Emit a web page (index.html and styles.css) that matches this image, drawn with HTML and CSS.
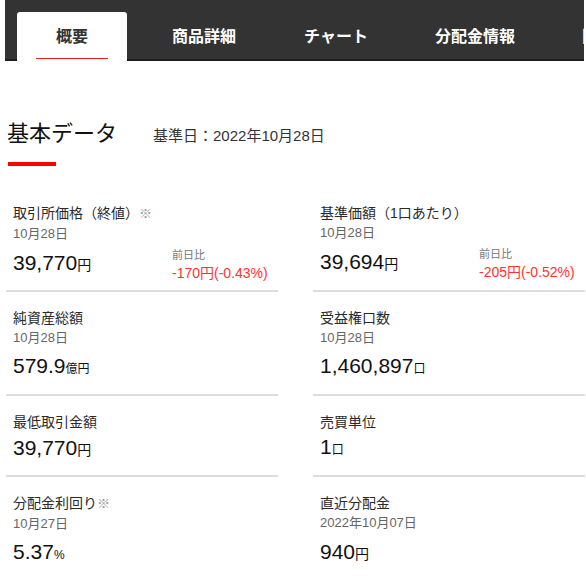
FILE: index.html
```html
<!DOCTYPE html>
<html lang="ja">
<head>
<meta charset="utf-8">
<title>基本データ</title>
<link rel="stylesheet" href="styles.css">
</head>
<body>
<div class="page">
  <nav class="tabs">
    <div class="tab active"><span class="tab-label">概要</span><span class="tab-line"></span></div>
    <div class="tab"><span class="tab-label">商品詳細</span></div>
    <div class="tab"><span class="tab-label">チャート</span></div>
    <div class="tab tab-wide"><span class="tab-label">分配金情報</span></div>
    <div class="tab"><span class="tab-label">関連情報</span></div>
  </nav>

  <section class="basic">
    <div class="heading">
      <h2 class="title">基本データ</h2>
      <span class="base-date">基準日：2022年10月28日</span>
    </div>
    <div class="heading-bar"></div>

    <div class="grid">
      <div class="item">
        <div class="label">取引所価格（終値）<span class="note">※</span></div>
        <div class="date">10月28日</div>
        <div class="value-row">
          <div class="value">39,770<span class="unit">円</span></div>
          <div class="change">
            <div class="change-label">前日比</div>
            <div class="change-val">-170円(-0.43%)</div>
          </div>
        </div>
      </div>
      <div class="item">
        <div class="label">基準価額（1口あたり）</div>
        <div class="date">10月28日</div>
        <div class="value-row">
          <div class="value">39,694<span class="unit">円</span></div>
          <div class="change">
            <div class="change-label">前日比</div>
            <div class="change-val">-205円(-0.52%)</div>
          </div>
        </div>
      </div>

      <div class="item">
        <div class="label">純資産総額</div>
        <div class="date">10月28日</div>
        <div class="value-row">
          <div class="value">579.9<span class="unit small">億円</span></div>
        </div>
      </div>
      <div class="item">
        <div class="label">受益権口数</div>
        <div class="date">10月28日</div>
        <div class="value-row">
          <div class="value">1,460,897<span class="unit small">口</span></div>
        </div>
      </div>

      <div class="item nodate">
        <div class="label">最低取引金額</div>
        <div class="value-row">
          <div class="value">39,770<span class="unit">円</span></div>
        </div>
      </div>
      <div class="item nodate">
        <div class="label">売買単位</div>
        <div class="value-row">
          <div class="value">1<span class="unit small">口</span></div>
        </div>
      </div>

      <div class="item">
        <div class="label">分配金利回り<span class="note">※</span></div>
        <div class="date">10月27日</div>
        <div class="value-row">
          <div class="value">5.37<span class="unit small">%</span></div>
        </div>
      </div>
      <div class="item">
        <div class="label">直近分配金</div>
        <div class="date">2022年10月07日</div>
        <div class="value-row">
          <div class="value">940<span class="unit">円</span></div>
        </div>
      </div>
    </div>
  </section>
</div>
</body>
</html>
```

FILE: styles.css
```css
html, body {
  margin: 0;
  padding: 0;
  background: #fff;
}

body {
  font-family: "Liberation Sans", "Noto Sans CJK JP", sans-serif;
  color: #222;
}

.page {
  margin-left: 5px;
  width: 580px;
}

/* ---------- tabs ---------- */
.tabs {
  display: flex;
  gap: 22px;
  width: 579px;
  height: 61px;
  box-sizing: border-box;
  padding-left: 12px;
  background: #333333;
  box-shadow: inset 0 -2px 0 #1e1e1e;
  overflow: hidden;
}

.tab {
  flex-shrink: 0;
  min-width: 110px;
  height: 49px;
  margin-top: 12px;
  padding: 0 18px;
  box-sizing: border-box;
  display: flex;
  flex-direction: column;
  align-items: center;
}

.tab.tab-wide {
  padding: 0 22px;
}

.tab-label {
  margin-top: 11px;
  font-family: "Noto Sans CJK JP", sans-serif;
  font-size: 16px;
  font-weight: 700;
  line-height: 24px;
  color: #fff;
  white-space: nowrap;
}

.tab.active {
  background: #fff;
  border-radius: 3px 3px 0 0;
}

.tab.active .tab-label {
  color: #333;
}

.tab-line {
  display: block;
  width: 72px;
  height: 1px;
  margin-top: 11px;
  background: #f02020;
}

/* ---------- heading ---------- */
.heading {
  display: flex;
  align-items: baseline;
  margin-top: 58px;
}

.title {
  margin: 0 0 0 2px;
  font-size: 22px;
  line-height: 30px;
  font-weight: 400;
  color: #111;
}

.base-date {
  margin-left: 36px;
  font-size: 15px;
  color: #333;
}

.heading-bar {
  width: 48px;
  height: 4px;
  margin: 13px 0 0 3px;
  background: #ff0000;
}

/* ---------- grid ---------- */
.grid {
  display: grid;
  grid-template-columns: 272px 272px;
  column-gap: 35px;
  row-gap: 16px;
  margin: 37px 0 0 1px;
}

.item {
  padding: 0 7px 10px;
  border-bottom: 2px solid #dddddd;
}

.label {
  font-size: 14px;
  line-height: 20px;
  color: #2a2a2a;
  white-space: nowrap;
}

.note {
  color: #999;
  font-size: 13px;
}

.date {
  font-size: 13px;
  line-height: 20px;
  color: #666;
}

.value-row {
  display: flex;
  align-items: flex-end;
  height: 32px;
  margin-top: 4px;
}

.item.nodate .value-row {
  height: 29px;
}

.value {
  width: 159px;
  flex-shrink: 0;
  font-size: 21px;
  line-height: 30px;
  color: #111;
}

.unit {
  font-size: 14px;
}

.unit.small {
  font-size: 12px;
}

.change {
  margin-bottom: -2px;
  white-space: nowrap;
}

.change-label {
  font-size: 11px;
  line-height: 14px;
  color: #777;
}

.change-val {
  margin-top: 2px;
  font-size: 14px;
  line-height: 18px;
  color: #ff3333;
}
```
